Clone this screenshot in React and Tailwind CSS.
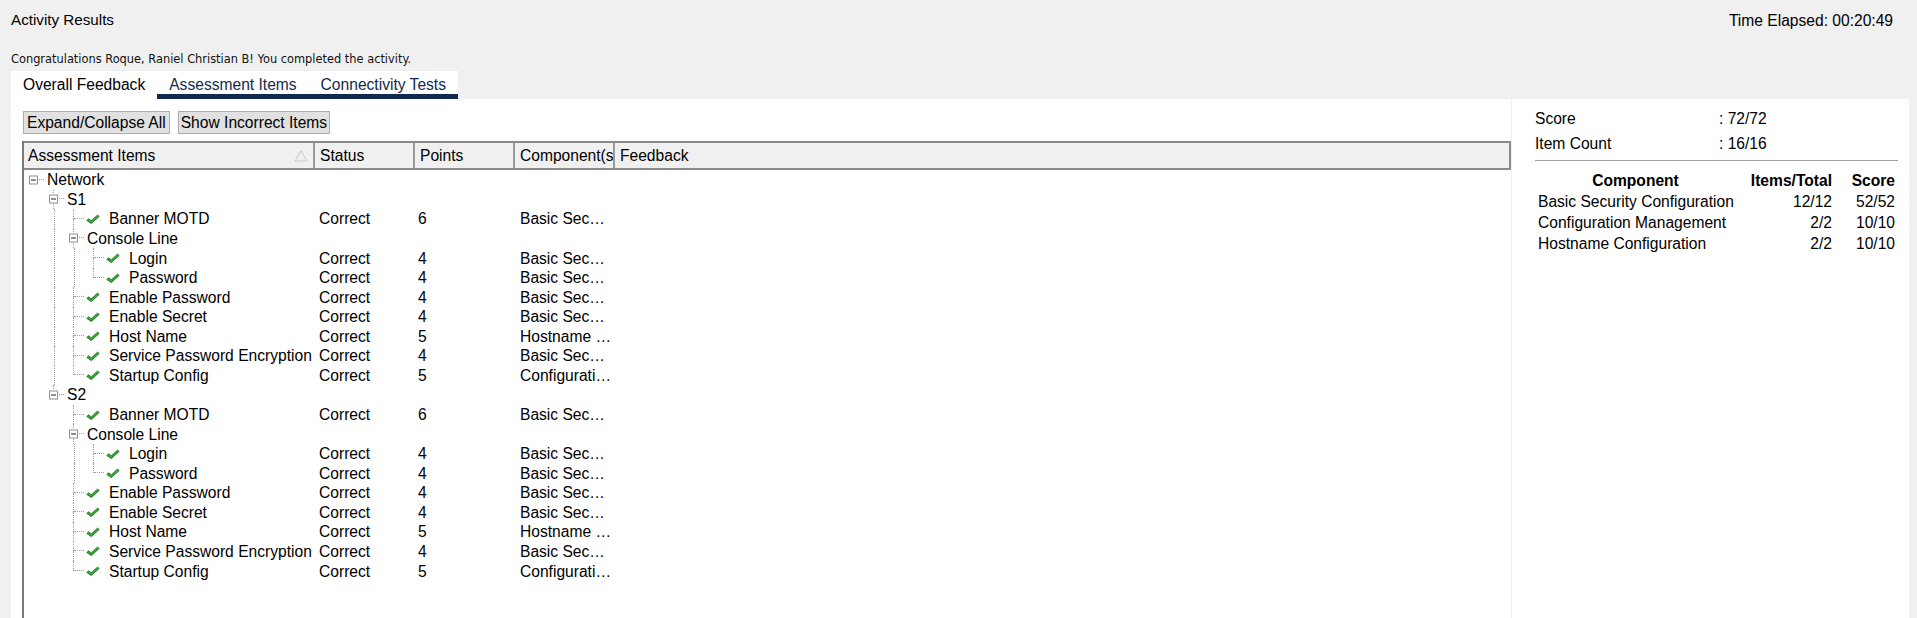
const items = [
  { name: "Banner MOTD", pts: 6, comp: "Basic Security Configuration" },
  {
    name: "Console Line",
    children: [
      { name: "Login", pts: 4, comp: "Basic Security Configuration" },
      { name: "Password", pts: 4, comp: "Basic Security Configuration" },
    ],
  },
  { name: "Enable Password", pts: 4, comp: "Basic Security Configuration" },
  { name: "Enable Secret", pts: 4, comp: "Basic Security Configuration" },
  { name: "Host Name", pts: 5, comp: "Hostname Configuration" },
  { name: "Service Password Encryption", pts: 4, comp: "Basic Security Configuration" },
  { name: "Startup Config", pts: 5, comp: "Configuration Management" },
];

const tree = [
  {
    name: "Network",
    children: [
      { name: "S1", children: items },
      { name: "S2", children: items },
    ],
  },
];

// flatten the tree, keeping which ancestor columns still need a line
function flatten(nodes, depth, guides, out) {
  nodes.forEach((node, i) => {
    const hasNext = i < nodes.length - 1;
    out.push({ ...node, depth, guides, hasNext, root: depth === 0 });
    if (node.children) flatten(node.children, depth + 1, [...guides, hasNext], out);
  });
  return out;
}

const rows = flatten(tree, 0, [], []);

const components = [
  ["Basic Security Configuration", "12/12", "52/52"],
  ["Configuration Management", "2/2", "10/10"],
  ["Hostname Configuration", "2/2", "10/10"],
];

function Check() {
  return (
    <svg width="16" height="16" viewBox="0 0 16 16">
      <path
        d="M1.8 9.4 L4 7.8 L6.2 10 L12.4 4.2 L14.2 5.4 L6.3 12.6 Z"
        fill="#35b035"
        stroke="#1c6a1c"
        strokeWidth="0.9"
        strokeLinejoin="round"
      />
    </svg>
  );
}

function Guide({ line }) {
  return (
    <div className="flex h-full w-[20px] shrink-0 justify-center">
      {line && <div className="h-full w-0 border-l border-dotted border-[#a0a0a0]" />}
    </div>
  );
}

function OwnCol({ row }) {
  const up = !row.root;
  const down = row.hasNext;
  return (
    <div className="relative grid h-full w-[20px] shrink-0 grid-cols-[10px_10px] grid-rows-2">
      <div className={up ? "border-r border-dotted border-[#a0a0a0]" : ""} />
      <div className="border-b border-dotted border-[#a0a0a0]" />
      <div className={down ? "border-r border-dotted border-[#a0a0a0]" : ""} />
      <div />
      {row.children && (
        <div className="absolute left-[5px] top-1/2 flex h-[9px] w-[9px] -translate-y-1/2 items-center justify-center border border-[#919191] bg-white">
          <div className="h-px w-[5px] bg-[#222]" />
        </div>
      )}
    </div>
  );
}

function TreeRow({ row }) {
  const leaf = !row.children;
  return (
    <div className="flex h-[19.57px] items-center whitespace-nowrap leading-[19px]">
      <div className="flex h-full w-[291px] shrink-0 items-center overflow-hidden">
        {row.guides.map((g, k) => (
          <Guide key={k} line={g} />
        ))}
        <OwnCol row={row} />
        {leaf && (
          <span className="flex w-[20px] shrink-0 pl-[1px]">
            <Check />
          </span>
        )}
        <span className={leaf ? "ml-[5px]" : "ml-[3px]"}>{row.name}</span>
      </div>
      {leaf && (
        <>
          <div className="w-[100px] shrink-0 pl-[4px]">Correct</div>
          <div className="w-[100px] shrink-0 pl-[3px]">{row.pts}</div>
          <div className="w-[100px] shrink-0 pl-[5px]">
            <div className="w-[92px] truncate">{row.comp}</div>
          </div>
        </>
      )}
    </div>
  );
}

export default function App() {
  return (
    <div className="flex h-[618px] w-[1917px] flex-col overflow-hidden bg-[#f0f0f0] font-['Liberation_Sans',Arial,sans-serif] text-[15.6px] text-black">
      {/* top bar */}
      <div className="flex h-[41px] shrink-0 items-center justify-between pl-[11px] pr-[24px]">
        <span className="text-[15.2px]">Activity Results</span>
        <span>Time Elapsed: 00:20:49</span>
      </div>
      <div className="mt-[10px] pl-[11px] font-['DejaVu_Sans',sans-serif] text-[11.4px] leading-[16px] text-[#111]">
        Congratulations Roque, Raniel Christian B! You completed the activity.
      </div>

      {/* tabs */}
      <div className="ml-[11px] mt-[4px] flex h-[28px] w-fit shrink-0 bg-white leading-[18px]">
        <div className="h-[28px] px-[12px] pt-[5px]">Overall Feedback</div>
        <div className="h-[28px] border-b-[5px] border-[#0f2a4d] px-[12px] pt-[5px] text-[#122a4c]">
          Assessment Items
        </div>
        <div className="h-[28px] border-b-[5px] border-[#0f2a4d] px-[12px] pt-[5px] text-[#122a4c]">
          Connectivity Tests
        </div>
      </div>

      {/* panel */}
      <div className="ml-[11px] mr-[8px] flex min-h-0 flex-1 gap-px">
        {/* left */}
        <div className="flex w-[1500px] shrink-0 flex-col bg-white pl-[11px]">
          <div className="mt-[12px] flex gap-[8px] pl-[1px] leading-[18px]">
            <button className="h-[23px] border border-[#adadad] bg-[#e1e1e1] px-[3px]">
              Expand/Collapse All
            </button>
            <button className="h-[23px] border border-[#adadad] bg-[#e1e1e1] px-[2px]">
              Show Incorrect Items
            </button>
          </div>

          <div className="mt-[7px] flex flex-1 flex-col border-l-2 border-[#7a7a7a]">
            <div className="flex h-[29px] shrink-0 border-y-2 border-r-2 border-[#8a8a8a] bg-[#f0f0f0] leading-[18px]">
              <div className="flex w-[291px] shrink-0 items-center justify-between border-r-2 border-[#9a9a9a] pl-[4px] pr-[5px]">
                <span>Assessment Items</span>
                <svg width="14" height="12" viewBox="0 0 14 12">
                  <path d="M7 1 L13 11 L1 11 Z" fill="none" stroke="#c8c8c8" strokeWidth="1" />
                </svg>
              </div>
              <div className="flex w-[100px] shrink-0 items-center border-r-2 border-[#9a9a9a] pl-[5px]">
                Status
              </div>
              <div className="flex w-[100px] shrink-0 items-center border-r-2 border-[#9a9a9a] pl-[5px]">
                Points
              </div>
              <div className="flex w-[100px] shrink-0 items-center overflow-hidden whitespace-nowrap border-r-2 border-[#9a9a9a] pl-[5px]">
                Component(s)
              </div>
              <div className="flex flex-1 items-center pl-[5px]">Feedback</div>
            </div>
            <div className="flex flex-col">
              {rows.map((row, i) => (
                <TreeRow key={i} row={row} />
              ))}
            </div>
          </div>
        </div>

        {/* right */}
        <div className="flex flex-1 flex-col bg-white pl-[23px] pr-[11px] pt-[7px]">
          <div className="grid grid-cols-[184px_1fr] leading-[25px]">
            <span>Score</span>
            <span>: 72/72</span>
            <span>Item Count</span>
            <span>: 16/16</span>
          </div>
          <div className="mt-[4px] border-t border-[#a0a0a0]" />
          <div className="mt-[9px] grid grid-cols-[201px_96px_63px] whitespace-nowrap leading-[21px]">
            <span className="text-center font-bold">Component</span>
            <span className="text-right font-bold">Items/Total</span>
            <span className="text-right font-bold">Score</span>
            {components.map((c) => (
              <div key={c[0]} className="contents">
                <span className="pl-[3px]">{c[0]}</span>
                <span className="text-right">{c[1]}</span>
                <span className="text-right">{c[2]}</span>
              </div>
            ))}
          </div>
        </div>
      </div>
    </div>
  );
}
